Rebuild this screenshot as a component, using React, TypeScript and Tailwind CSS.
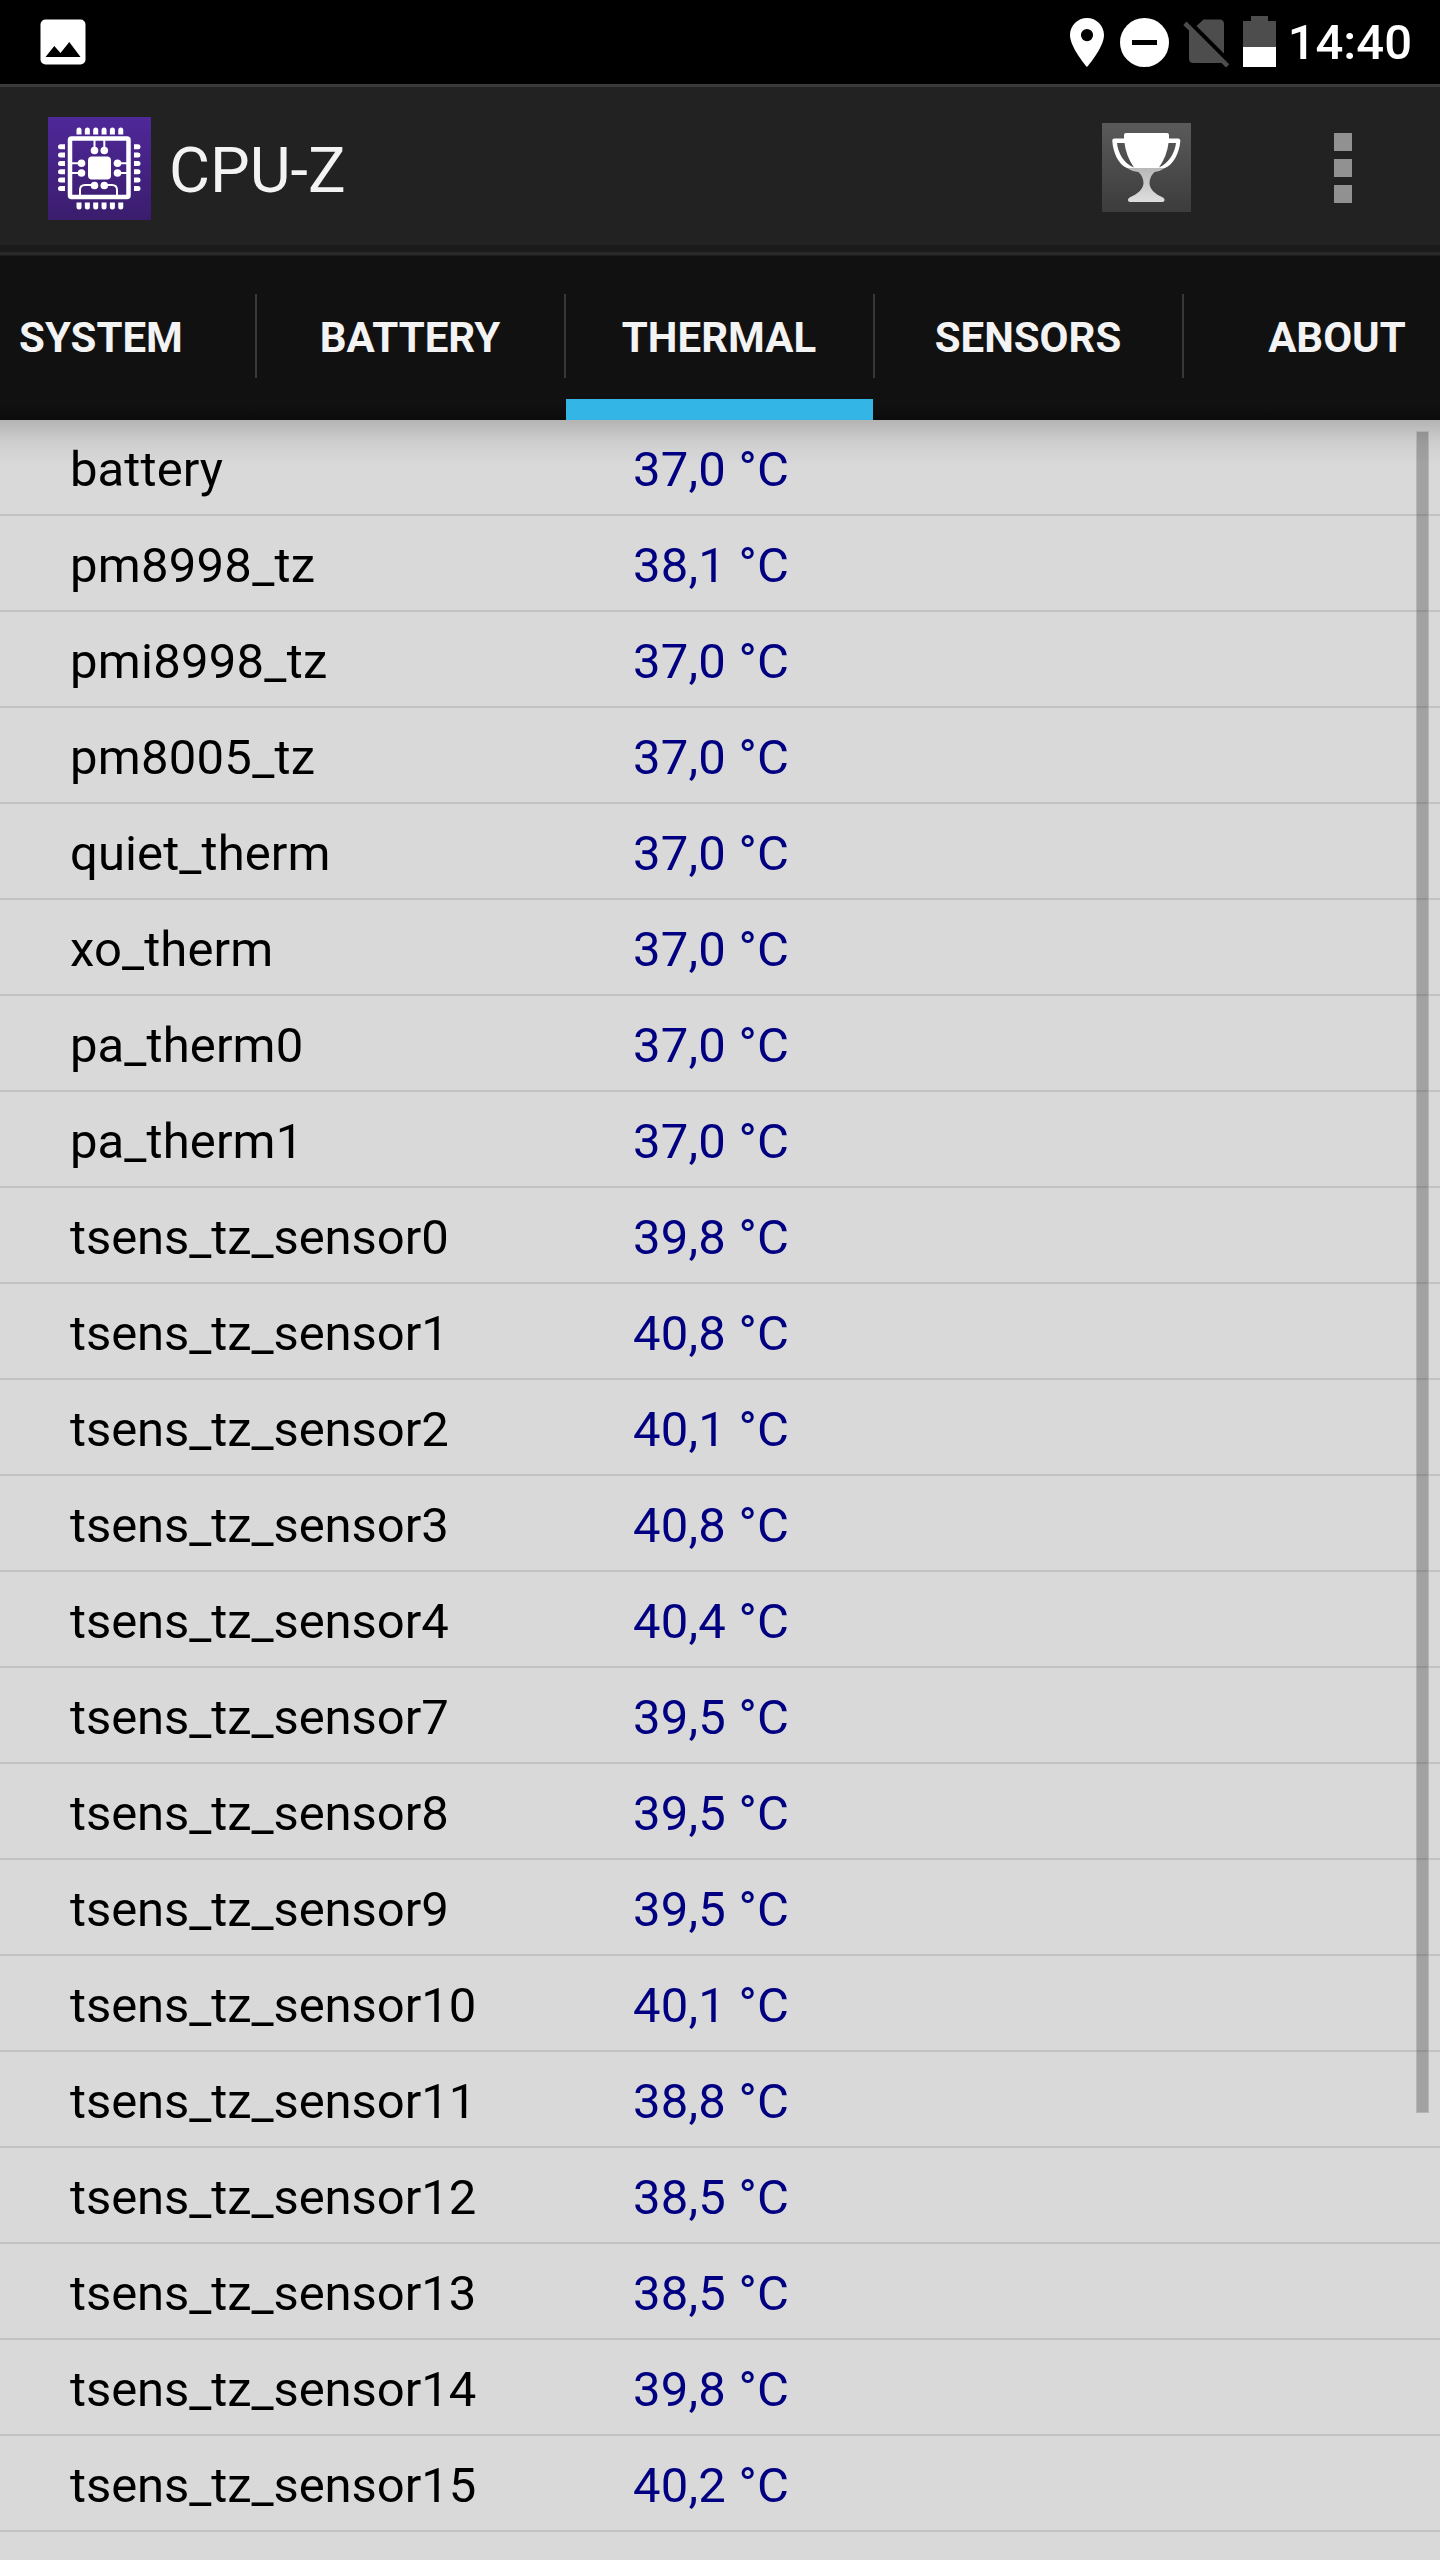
import React from "react";

const rows: [string, string][] = [
  ["battery", "37,0"],
  ["pm8998_tz", "38,1"],
  ["pmi8998_tz", "37,0"],
  ["pm8005_tz", "37,0"],
  ["quiet_therm", "37,0"],
  ["xo_therm", "37,0"],
  ["pa_therm0", "37,0"],
  ["pa_therm1", "37,0"],
  ["tsens_tz_sensor0", "39,8"],
  ["tsens_tz_sensor1", "40,8"],
  ["tsens_tz_sensor2", "40,1"],
  ["tsens_tz_sensor3", "40,8"],
  ["tsens_tz_sensor4", "40,4"],
  ["tsens_tz_sensor7", "39,5"],
  ["tsens_tz_sensor8", "39,5"],
  ["tsens_tz_sensor9", "39,5"],
  ["tsens_tz_sensor10", "40,1"],
  ["tsens_tz_sensor11", "38,8"],
  ["tsens_tz_sensor12", "38,5"],
  ["tsens_tz_sensor13", "38,5"],
  ["tsens_tz_sensor14", "39,8"],
  ["tsens_tz_sensor15", "40,2"],
];

const tabs = ["SYSTEM", "BATTERY", "THERMAL", "SENSORS", "ABOUT"];

function nameTracking(name: string) {
  if (name.startsWith("tsens")) return "tracking-[-0.08px]";
  if (name.startsWith("pm")) return "tracking-[0.25px]";
  return "tracking-[0.1px]";
}

function StatusBar() {
  return (
    <div className="flex h-[84px] items-start bg-black">
      <svg className="mt-[19px] ml-10 h-[46px] w-[46px]" viewBox="0 0 46 46">
        <rect x="0.5" y="0.5" width="45" height="45" rx="5" fill="#fff" />
        <path d="M5.5 38 14.3 27 20.5 34 29.3 23 40.5 38z" fill="#000" />
      </svg>
      <div className="ml-auto flex h-[84px] items-start">
        <svg className="mt-[18px] h-[49px] w-[34px]" viewBox="0 0 34 49">
          <path
            fillRule="evenodd"
            fill="#fff"
            d="M17 0C7.600 0 0 7.600 0 17C0 29.700 17 49 17 49S34 29.700 34 17C34 7.600 26.400 0 17 0zM17 11a6.100 6.100 0 1 1 0 12.200a6.100 6.100 0 0 1 0-12.200z"
          />
        </svg>
        <svg className="mt-[18px] ml-4 h-[49px] w-[49px]" viewBox="0 0 49 49">
          <circle cx="24.5" cy="24.5" r="24.5" fill="#fff" />
          <rect x="12" y="22" width="25" height="5" fill="#000" />
        </svg>
        <svg className="mt-[18px] ml-[14px] h-[50px] w-[47px]" viewBox="0 0 47 50">
          <g fill="#4d4d4d">
            <path d="M20.500 1.500H36.500Q41 1.500 41 6V35.500L13.500 8z" />
            <path d="M3.500 3.500 46.200 46.200 43 49.400 38.500 45H10.500Q6 45 6 40.500V12.500L0.300 6.900z" />
          </g>
        </svg>
        <svg className="mt-4 ml-[13px] h-[51px] w-[33px]" viewBox="0 0 33 51">
          <path d="M0 5H8V0H25V5H33V32H0z" fill="#4d4d4d" />
          <rect y="31" width="33" height="20" fill="#fff" />
        </svg>
        <span className="mt-[13px] mr-7 ml-3 text-[49px] leading-[60px] font-medium text-white">14:40</span>
      </div>
    </div>
  );
}

function ChipIcon() {
  const pins = [0, 1, 2, 3, 4, 5].map((i) => 31 + i * 8.35);
  const side = [0, 1, 2, 3, 4, 5].map((i) => 29.700 + i * 8.35);
  return (
    <svg className="h-[103px] w-[103px]" viewBox="0 0 103 103">
      <defs>
        <linearGradient id="chip" x1="0" y1="0" x2="0" y2="1">
          <stop offset="0" stopColor="#4f2899" />
          <stop offset="1" stopColor="#3a1d6d" />
        </linearGradient>
      </defs>
      <rect width="103" height="103" fill="url(#chip)" />
      <g fill="#fff">
        {pins.map((x) => (
          <g key={x}>
            <path d={`M${x - 2.500} 17.500V13a2.500 2.500 0 0 1 5 0V17.500z`} />
            <path d={`M${x - 2.500} 85.500V90a2.500 2.500 0 0 0 5 0V85.500z`} />
          </g>
        ))}
        {side.map((y) => (
          <g key={y}>
            <path d={`M17 ${y - 2.500}H12.500a2.500 2.500 0 0 0 0 5H17z`} />
            <path d={`M86 ${y - 2.500}H90a2.500 2.500 0 0 1 0 5H86z`} />
          </g>
        ))}
        <rect x="40" y="39.500" width="23" height="23" rx="4" />
        {[
          [46.5, 33.5], [56.3, 33.5], [46.5, 68.5], [56.3, 68.5],
          [33.5, 46.3], [33.5, 56], [69.500, 46.3], [69.500, 56],
        ].map(([x, y]) => (
          <circle key={`${x}-${y}`} cx={x} cy={y} r="3.800" />
        ))}
      </g>
      <g fill="none" stroke="#fff">
        <rect x="22" y="21.500" width="58.500" height="58.500" rx="1.500" strokeWidth="4.500" />
        <path
          strokeWidth="2"
          d="M46.500 33V23M56.300 33V23M33 46.300H23M33 56H23M70 46.300H80M70 56H80M46.500 68H37Q32 68 32 73V79M56.300 68H64Q69 68 69 73V79"
        />
      </g>
    </svg>
  );
}

function TrophyIcon() {
  return (
    <svg className="h-[89px] w-[89px]" viewBox="0 0 89 89">
      <defs>
        <linearGradient id="tile" x1="0" y1="0" x2="0" y2="1">
          <stop offset="0" stopColor="#5a5a5a" />
          <stop offset="1" stopColor="#3c3c3c" />
        </linearGradient>
        <linearGradient id="foot" x1="0" y1="0" x2="0" y2="1">
          <stop offset="0" stopColor="#b8b8b8" />
          <stop offset="1" stopColor="#dedede" />
        </linearGradient>
      </defs>
      <rect width="89" height="89" fill="url(#tile)" />
      <path
        fill="url(#foot)"
        d="M25 45H63Q58 48.500 52.500 49Q47.500 54 47.500 60C47.500 66 53 71 60 74Q63 75.500 62.500 77.500Q62 79 60 79H28.500Q26.500 79 26 77.500Q25.500 75.500 28.500 74C35.500 71 41.500 66 41.500 60Q41.500 54 36.500 49Q30 48.500 25 45z"
      />
      <path
        fill="#fff"
        fillRule="evenodd"
        d="M24 10H65Q67 10 67 12V15.500H76Q78.500 15.500 78.300 18C77.500 30 71 42 63 45H25C17 42 11 30 10.300 18Q10 15.500 12.500 15.500H22V12Q22 10 24 10zM15 20C16 30 22 41 32 44.500Q24 33 22.500 20zM74 20H66.500Q65 33 57 44.500C66 41 73 30 74 20z"
      />
    </svg>
  );
}

function ActionBar() {
  return (
    <div className="flex h-[172px] flex-col bg-[#222222]">
      <div className="h-[3px] bg-[#3a3a3a]" />
      <div className="flex flex-1 items-start pl-12">
        <div className="mt-[30px]">
          <ChipIcon />
        </div>
        <h1 className="mt-[47px] ml-[18px] text-[63px] leading-[74px] font-normal text-[#f3f3f3]">CPU-Z</h1>
        <div className="mt-9 mr-[88px] ml-auto flex items-center gap-[143px]">
          <TrophyIcon />
          <div className="flex flex-col gap-2">
            <div className="h-[18px] w-[18px] bg-[#919191]" />
            <div className="h-[18px] w-[18px] bg-[#919191]" />
            <div className="h-[18px] w-[18px] bg-[#919191]" />
          </div>
        </div>
      </div>
      <div className="h-[7px] bg-[#1b1b1b]" />
      <div className="h-[3px] bg-[#292929]" />
      <div className="h-px bg-[#1d1d1d]" />
    </div>
  );
}

function TabBar() {
  return (
    <div className="h-[164px] overflow-hidden bg-[#111111]">
      <div className="-ml-[54px] flex h-full w-[1545px] bg-linear-to-b from-transparent from-90% to-[#0b0b0b]">
        {tabs.map((t) => (
          <div key={t} className="flex h-full w-[309px]">
            <div className="mt-[38px] h-[84px] w-0.5 bg-[#383838]" />
            <div className="flex h-full w-[307px] flex-col">
              <div className="flex h-full items-center justify-center pr-px pb-0.5 text-[42px] font-bold text-[#f3f3f3]">{t}</div>
              {t === "THERMAL" && <div className="-mt-[21px] h-[21px] shrink-0 bg-[#33b5e5]" />}
            </div>
          </div>
        ))}
      </div>
    </div>
  );
}

export default function App() {
  return (
    <div className="h-[2560px] w-[1440px] overflow-hidden bg-[#d9d9d9] font-['Roboto',sans-serif]">
      <StatusBar />
      <ActionBar />
      <TabBar />
      <div className="relative">
        <div className="absolute inset-x-0 top-0 h-[46px] bg-linear-to-b from-[#b4b4b4] via-[#cfcfcf] to-[#d9d9d9]" />
        <div className="relative">
          {rows.map(([name, value]) => (
            <div key={name} className="flex h-24 items-center border-b-2 border-[#c3c3c3] pt-1.5 pl-[70px] text-[49px] leading-[60px]">
              <div className={`w-[563px] text-black ${nameTracking(name)}`}>{name}</div>
              <div className="tracking-[0.2px] text-[#000080]">{value} °C</div>
            </div>
          ))}
        </div>
        <div className="absolute top-[11px] right-[11px] h-[1682px] w-[13px] border border-[#c3c3c3]/60 bg-black/25" />
      </div>
    </div>
  );
}
